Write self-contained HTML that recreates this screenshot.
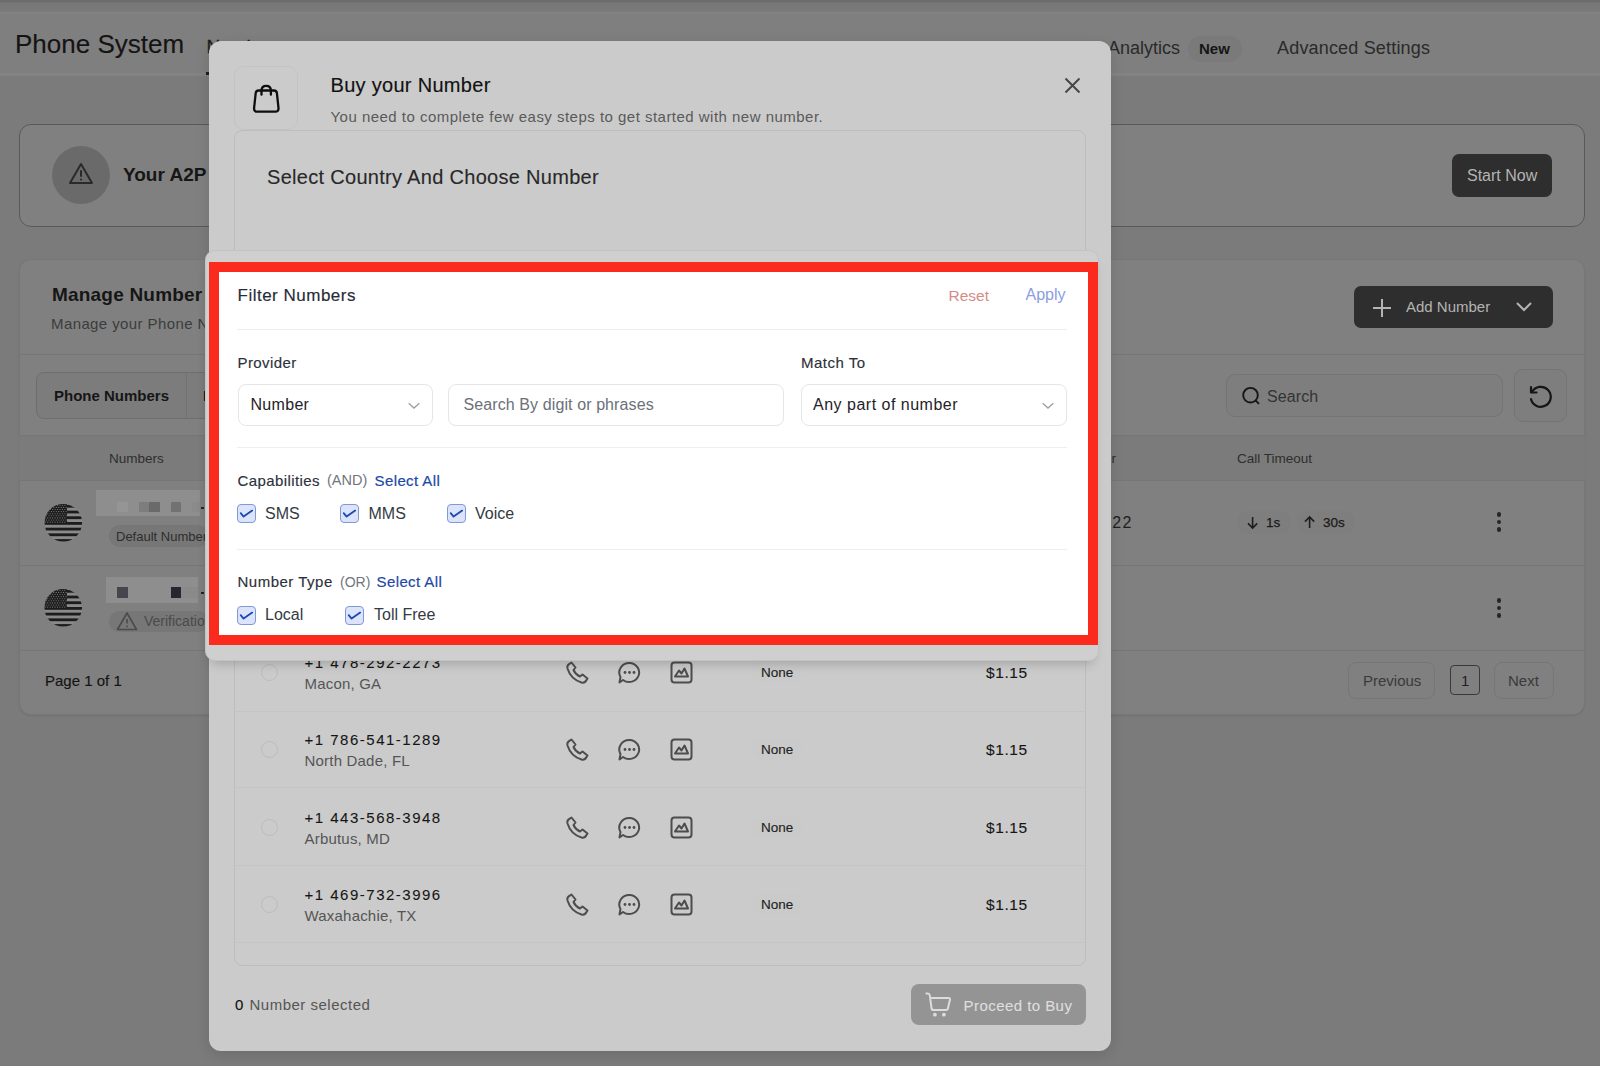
<!DOCTYPE html>
<html><head><meta charset="utf-8"><title>Phone System</title>
<style>
html,body{margin:0;padding:0;}
body{width:1600px;height:1066px;overflow:hidden;position:relative;background:#7b7b7b;font-family:"Liberation Sans", sans-serif;}
</style></head><body>
<div style="position:absolute;left:0px;top:2px;width:1600px;height:74px;background:#7f7f7f"></div><div style="position:absolute;left:0px;top:0px;width:1600px;height:12px;background:linear-gradient(#6c6c6c 0px,#6c6c6c 1.5px,#767676 3px,#7b7b7b 12px)"></div><div style="position:absolute;left:0px;top:12px;width:1600px;height:2px;background:#828282"></div><div style="position:absolute;left:0px;top:73px;width:1600px;height:3px;background:#838383"></div><div style="position:absolute;left:15px;top:30.99px;font-size:26px;line-height:26px;color:#141414;font-weight:400;white-space:nowrap;-webkit-text-stroke:0.15px currentColor;">Phone System</div><div style="position:absolute;left:206.5px;top:37.42px;font-size:19px;line-height:19px;color:#1e1e1e;font-weight:400;white-space:nowrap;-webkit-text-stroke:0.3px currentColor;">Numbers</div><div style="position:absolute;left:206px;top:72px;width:60px;height:3px;background:#1e1e1e"></div><div style="position:absolute;left:278px;top:38.76px;font-size:18px;line-height:18px;color:#2a2a2a;font-weight:400;white-space:nowrap;">Number Pools</div><div style="position:absolute;left:420px;top:38.76px;font-size:18px;line-height:18px;color:#2a2a2a;font-weight:400;white-space:nowrap;">Call Flows</div><div style="position:absolute;left:545px;top:38.76px;font-size:18px;line-height:18px;color:#2a2a2a;font-weight:400;white-space:nowrap;">Trust Center</div><div style="position:absolute;left:700px;top:38.76px;font-size:18px;line-height:18px;color:#2a2a2a;font-weight:400;white-space:nowrap;">Call Recordings</div><div style="position:absolute;left:880px;top:38.76px;font-size:18px;line-height:18px;color:#2a2a2a;font-weight:400;white-space:nowrap;">Voice AI</div><div style="position:absolute;left:1000px;top:38.76px;font-size:18px;line-height:18px;color:#2a2a2a;font-weight:400;white-space:nowrap;">Analytics</div><div style="position:absolute;left:1108px;top:38.76px;font-size:18px;line-height:18px;color:#2a2a2a;font-weight:400;white-space:nowrap;">Analytics</div><div style="position:absolute;left:1188px;top:36px;width:54px;height:26px;background:#7a7a7a;border-radius:13px"></div><div style="position:absolute;left:1199px;top:41.30px;font-size:15px;line-height:15px;color:#161616;font-weight:700;white-space:nowrap;">New</div><div style="position:absolute;left:1277px;top:38.76px;font-size:18px;line-height:18px;color:#2a2a2a;font-weight:400;white-space:nowrap;letter-spacing:0.18px;">Advanced Settings</div><div style="position:absolute;left:19px;top:124px;width:1564px;height:101px;border:1px solid #595959;border-radius:12px;background:#808080"></div><div style="position:absolute;left:52px;top:146px;width:58px;height:58px;border-radius:50%;background:#6a6a6a"></div><svg style="position:absolute;left:68px;top:161px;" width="26" height="26" viewBox="0 0 26 26"><path d="M13 3 L24 22 L2 22 Z" fill="none" stroke="#2a2a2a" stroke-width="2" stroke-linejoin="round"/><line x1="13" y1="10" x2="13" y2="15" stroke="#2a2a2a" stroke-width="2" stroke-linecap="round"/><circle cx="13" cy="18.5" r="1.1" fill="#2a2a2a"/></svg><div style="position:absolute;left:123px;top:164.92px;font-size:19px;line-height:19px;color:#161616;font-weight:700;white-space:nowrap;">Your A2P Registration is pending</div><div style="position:absolute;left:1452px;top:154px;width:100px;height:43px;background:#2e2e2e;border-radius:7px"></div><div style="position:absolute;left:1467px;top:167.96px;font-size:16px;line-height:16px;color:#b4b4b4;font-weight:400;white-space:nowrap;">Start Now</div><div style="position:absolute;left:19px;top:259px;width:1566px;height:456px;background:#808080;border-radius:12px;border:1px solid #777;box-sizing:border-box;box-shadow:0 1px 2px rgba(0,0,0,0.08)"></div><div style="position:absolute;left:52px;top:284.92px;font-size:19px;line-height:19px;color:#161616;font-weight:700;white-space:nowrap;letter-spacing:0.2px;">Manage Number</div><div style="position:absolute;left:51px;top:315.80px;font-size:15px;line-height:15px;color:#3c3c3c;font-weight:400;white-space:nowrap;letter-spacing:0.4px;">Manage your Phone Numbers</div><div style="position:absolute;left:1354px;top:286px;width:199px;height:42px;background:#2e2e2e;border-radius:7px"></div><svg style="position:absolute;left:1372px;top:298px;" width="20" height="20" viewBox="0 0 20 20"><path d="M10 1 V19 M1 10 H19" stroke="#b4b4b4" stroke-width="2"/></svg><div style="position:absolute;left:1406px;top:299.30px;font-size:15px;line-height:15px;color:#b4b4b4;font-weight:400;white-space:nowrap;">Add Number</div><svg style="position:absolute;left:1515px;top:300px;" width="18" height="12" viewBox="0 0 18 12"><path d="M2 3 L9 10 L16 3" fill="none" stroke="#b4b4b4" stroke-width="2"/></svg><div style="position:absolute;left:19px;top:354px;width:1566px;height:1px;background:#767676"></div><div style="position:absolute;left:36px;top:372px;width:300px;height:46.5px;border:1px solid #6e6e6e;border-radius:8px;background:#7c7c7c;box-sizing:border-box"></div><div style="position:absolute;left:185.5px;top:372px;width:1px;height:46.5px;background:#727272"></div><div style="position:absolute;left:54px;top:388.30px;font-size:15px;line-height:15px;color:#161616;font-weight:700;white-space:nowrap;">Phone Numbers</div><div style="position:absolute;left:203px;top:388.30px;font-size:15px;line-height:15px;color:#121212;font-weight:700;white-space:nowrap;">Porting</div><div style="position:absolute;left:1226px;top:374px;width:277px;height:43px;border:1px solid #747474;border-radius:9px;background:#7e7e7e;box-sizing:border-box"></div><svg style="position:absolute;left:1241px;top:386px;" width="21" height="21" viewBox="0 0 21 21"><circle cx="9.5" cy="9.2" r="7.3" fill="none" stroke="#161616" stroke-width="1.9"/><path d="M14.8 14.6 L17.5 17.3" stroke="#161616" stroke-width="1.9" stroke-linecap="round"/></svg><div style="position:absolute;left:1267px;top:389.46px;font-size:16px;line-height:16px;color:#343434;font-weight:400;white-space:nowrap;letter-spacing:0.1px;">Search</div><div style="position:absolute;left:1514px;top:369px;width:53px;height:53px;border:1px solid #747474;border-radius:9px;background:#7e7e7e;box-sizing:border-box"></div><svg style="position:absolute;left:1527px;top:383px;" width="28" height="28" viewBox="0 0 28 28"><path d="M5 9 A10 10 0 1 1 4 16" fill="none" stroke="#161616" stroke-width="2.2" stroke-linecap="round"/><path d="M4 4 V9.5 H9.5" fill="none" stroke="#161616" stroke-width="2.2" stroke-linecap="round" stroke-linejoin="round"/></svg><div style="position:absolute;left:19px;top:435px;width:1566px;height:46px;background:#7b7b7b;border-top:1px solid #767676;border-bottom:1px solid #767676;box-sizing:border-box"></div><div style="position:absolute;left:109px;top:451.57px;font-size:13.5px;line-height:13.5px;color:#2e2e2e;font-weight:400;white-space:nowrap;">Numbers</div><div style="position:absolute;left:1237px;top:451.57px;font-size:13.5px;line-height:13.5px;color:#2e2e2e;font-weight:400;white-space:nowrap;">Call Timeout</div><div style="position:absolute;left:1054.5px;top:451.57px;font-size:13.5px;line-height:13.5px;color:#2e2e2e;font-weight:400;white-space:nowrap;">Forwarder</div><div style="position:absolute;left:19px;top:565px;width:1566px;height:1px;background:#767676"></div><div style="position:absolute;left:19px;top:650px;width:1566px;height:1px;background:#767676"></div><svg style="position:absolute;left:0;top:0" width="1600" height="1066"><defs><clipPath id="c522.8"><circle cx="63.3" cy="522.8" r="18.8"/></clipPath></defs><g clip-path="url(#c522.8)"><rect x="44.5" y="503.99999999999994" width="37.6" height="37.6" fill="#8a8a8a"/><rect x="44.5" y="504.90" width="37.6" height="2.8" fill="#1c1c1c"/><rect x="44.5" y="510.60" width="37.6" height="2.8" fill="#1c1c1c"/><rect x="44.5" y="516.30" width="37.6" height="2.8" fill="#1c1c1c"/><rect x="44.5" y="522.00" width="37.6" height="2.8" fill="#1c1c1c"/><rect x="44.5" y="527.70" width="37.6" height="2.8" fill="#1c1c1c"/><rect x="44.5" y="533.40" width="37.6" height="2.8" fill="#1c1c1c"/><rect x="44.5" y="539.10" width="37.6" height="2.8" fill="#1c1c1c"/><rect x="44.5" y="503.99999999999994" width="22.5" height="19.8" fill="#1c1c1c"/><circle cx="45.30" cy="505.30" r="0.55" fill="#858585"/><circle cx="47.75" cy="505.30" r="0.55" fill="#858585"/><circle cx="50.20" cy="505.30" r="0.55" fill="#858585"/><circle cx="52.65" cy="505.30" r="0.55" fill="#858585"/><circle cx="55.10" cy="505.30" r="0.55" fill="#858585"/><circle cx="57.55" cy="505.30" r="0.55" fill="#858585"/><circle cx="60.00" cy="505.30" r="0.55" fill="#858585"/><circle cx="62.45" cy="505.30" r="0.55" fill="#858585"/><circle cx="64.90" cy="505.30" r="0.55" fill="#858585"/><circle cx="46.50" cy="507.40" r="0.55" fill="#858585"/><circle cx="48.95" cy="507.40" r="0.55" fill="#858585"/><circle cx="51.40" cy="507.40" r="0.55" fill="#858585"/><circle cx="53.85" cy="507.40" r="0.55" fill="#858585"/><circle cx="56.30" cy="507.40" r="0.55" fill="#858585"/><circle cx="58.75" cy="507.40" r="0.55" fill="#858585"/><circle cx="61.20" cy="507.40" r="0.55" fill="#858585"/><circle cx="63.65" cy="507.40" r="0.55" fill="#858585"/><circle cx="66.10" cy="507.40" r="0.55" fill="#858585"/><circle cx="45.30" cy="509.50" r="0.55" fill="#858585"/><circle cx="47.75" cy="509.50" r="0.55" fill="#858585"/><circle cx="50.20" cy="509.50" r="0.55" fill="#858585"/><circle cx="52.65" cy="509.50" r="0.55" fill="#858585"/><circle cx="55.10" cy="509.50" r="0.55" fill="#858585"/><circle cx="57.55" cy="509.50" r="0.55" fill="#858585"/><circle cx="60.00" cy="509.50" r="0.55" fill="#858585"/><circle cx="62.45" cy="509.50" r="0.55" fill="#858585"/><circle cx="64.90" cy="509.50" r="0.55" fill="#858585"/><circle cx="46.50" cy="511.60" r="0.55" fill="#858585"/><circle cx="48.95" cy="511.60" r="0.55" fill="#858585"/><circle cx="51.40" cy="511.60" r="0.55" fill="#858585"/><circle cx="53.85" cy="511.60" r="0.55" fill="#858585"/><circle cx="56.30" cy="511.60" r="0.55" fill="#858585"/><circle cx="58.75" cy="511.60" r="0.55" fill="#858585"/><circle cx="61.20" cy="511.60" r="0.55" fill="#858585"/><circle cx="63.65" cy="511.60" r="0.55" fill="#858585"/><circle cx="66.10" cy="511.60" r="0.55" fill="#858585"/><circle cx="45.30" cy="513.70" r="0.55" fill="#858585"/><circle cx="47.75" cy="513.70" r="0.55" fill="#858585"/><circle cx="50.20" cy="513.70" r="0.55" fill="#858585"/><circle cx="52.65" cy="513.70" r="0.55" fill="#858585"/><circle cx="55.10" cy="513.70" r="0.55" fill="#858585"/><circle cx="57.55" cy="513.70" r="0.55" fill="#858585"/><circle cx="60.00" cy="513.70" r="0.55" fill="#858585"/><circle cx="62.45" cy="513.70" r="0.55" fill="#858585"/><circle cx="64.90" cy="513.70" r="0.55" fill="#858585"/><circle cx="46.50" cy="515.80" r="0.55" fill="#858585"/><circle cx="48.95" cy="515.80" r="0.55" fill="#858585"/><circle cx="51.40" cy="515.80" r="0.55" fill="#858585"/><circle cx="53.85" cy="515.80" r="0.55" fill="#858585"/><circle cx="56.30" cy="515.80" r="0.55" fill="#858585"/><circle cx="58.75" cy="515.80" r="0.55" fill="#858585"/><circle cx="61.20" cy="515.80" r="0.55" fill="#858585"/><circle cx="63.65" cy="515.80" r="0.55" fill="#858585"/><circle cx="66.10" cy="515.80" r="0.55" fill="#858585"/><circle cx="45.30" cy="517.90" r="0.55" fill="#858585"/><circle cx="47.75" cy="517.90" r="0.55" fill="#858585"/><circle cx="50.20" cy="517.90" r="0.55" fill="#858585"/><circle cx="52.65" cy="517.90" r="0.55" fill="#858585"/><circle cx="55.10" cy="517.90" r="0.55" fill="#858585"/><circle cx="57.55" cy="517.90" r="0.55" fill="#858585"/><circle cx="60.00" cy="517.90" r="0.55" fill="#858585"/><circle cx="62.45" cy="517.90" r="0.55" fill="#858585"/><circle cx="64.90" cy="517.90" r="0.55" fill="#858585"/><circle cx="46.50" cy="520.00" r="0.55" fill="#858585"/><circle cx="48.95" cy="520.00" r="0.55" fill="#858585"/><circle cx="51.40" cy="520.00" r="0.55" fill="#858585"/><circle cx="53.85" cy="520.00" r="0.55" fill="#858585"/><circle cx="56.30" cy="520.00" r="0.55" fill="#858585"/><circle cx="58.75" cy="520.00" r="0.55" fill="#858585"/><circle cx="61.20" cy="520.00" r="0.55" fill="#858585"/><circle cx="63.65" cy="520.00" r="0.55" fill="#858585"/><circle cx="66.10" cy="520.00" r="0.55" fill="#858585"/><circle cx="45.30" cy="522.10" r="0.55" fill="#858585"/><circle cx="47.75" cy="522.10" r="0.55" fill="#858585"/><circle cx="50.20" cy="522.10" r="0.55" fill="#858585"/><circle cx="52.65" cy="522.10" r="0.55" fill="#858585"/><circle cx="55.10" cy="522.10" r="0.55" fill="#858585"/><circle cx="57.55" cy="522.10" r="0.55" fill="#858585"/><circle cx="60.00" cy="522.10" r="0.55" fill="#858585"/><circle cx="62.45" cy="522.10" r="0.55" fill="#858585"/><circle cx="64.90" cy="522.10" r="0.55" fill="#858585"/></g></svg><svg style="position:absolute;left:0;top:0" width="1600" height="1066"><defs><clipPath id="c607.8"><circle cx="63.2" cy="607.8" r="18.8"/></clipPath></defs><g clip-path="url(#c607.8)"><rect x="44.400000000000006" y="589.0" width="37.6" height="37.6" fill="#8a8a8a"/><rect x="44.400000000000006" y="589.90" width="37.6" height="2.8" fill="#1c1c1c"/><rect x="44.400000000000006" y="595.60" width="37.6" height="2.8" fill="#1c1c1c"/><rect x="44.400000000000006" y="601.30" width="37.6" height="2.8" fill="#1c1c1c"/><rect x="44.400000000000006" y="607.00" width="37.6" height="2.8" fill="#1c1c1c"/><rect x="44.400000000000006" y="612.70" width="37.6" height="2.8" fill="#1c1c1c"/><rect x="44.400000000000006" y="618.40" width="37.6" height="2.8" fill="#1c1c1c"/><rect x="44.400000000000006" y="624.10" width="37.6" height="2.8" fill="#1c1c1c"/><rect x="44.400000000000006" y="589.0" width="22.5" height="19.8" fill="#1c1c1c"/><circle cx="45.20" cy="590.30" r="0.55" fill="#858585"/><circle cx="47.65" cy="590.30" r="0.55" fill="#858585"/><circle cx="50.10" cy="590.30" r="0.55" fill="#858585"/><circle cx="52.55" cy="590.30" r="0.55" fill="#858585"/><circle cx="55.00" cy="590.30" r="0.55" fill="#858585"/><circle cx="57.45" cy="590.30" r="0.55" fill="#858585"/><circle cx="59.90" cy="590.30" r="0.55" fill="#858585"/><circle cx="62.35" cy="590.30" r="0.55" fill="#858585"/><circle cx="64.80" cy="590.30" r="0.55" fill="#858585"/><circle cx="46.40" cy="592.40" r="0.55" fill="#858585"/><circle cx="48.85" cy="592.40" r="0.55" fill="#858585"/><circle cx="51.30" cy="592.40" r="0.55" fill="#858585"/><circle cx="53.75" cy="592.40" r="0.55" fill="#858585"/><circle cx="56.20" cy="592.40" r="0.55" fill="#858585"/><circle cx="58.65" cy="592.40" r="0.55" fill="#858585"/><circle cx="61.10" cy="592.40" r="0.55" fill="#858585"/><circle cx="63.55" cy="592.40" r="0.55" fill="#858585"/><circle cx="66.00" cy="592.40" r="0.55" fill="#858585"/><circle cx="45.20" cy="594.50" r="0.55" fill="#858585"/><circle cx="47.65" cy="594.50" r="0.55" fill="#858585"/><circle cx="50.10" cy="594.50" r="0.55" fill="#858585"/><circle cx="52.55" cy="594.50" r="0.55" fill="#858585"/><circle cx="55.00" cy="594.50" r="0.55" fill="#858585"/><circle cx="57.45" cy="594.50" r="0.55" fill="#858585"/><circle cx="59.90" cy="594.50" r="0.55" fill="#858585"/><circle cx="62.35" cy="594.50" r="0.55" fill="#858585"/><circle cx="64.80" cy="594.50" r="0.55" fill="#858585"/><circle cx="46.40" cy="596.60" r="0.55" fill="#858585"/><circle cx="48.85" cy="596.60" r="0.55" fill="#858585"/><circle cx="51.30" cy="596.60" r="0.55" fill="#858585"/><circle cx="53.75" cy="596.60" r="0.55" fill="#858585"/><circle cx="56.20" cy="596.60" r="0.55" fill="#858585"/><circle cx="58.65" cy="596.60" r="0.55" fill="#858585"/><circle cx="61.10" cy="596.60" r="0.55" fill="#858585"/><circle cx="63.55" cy="596.60" r="0.55" fill="#858585"/><circle cx="66.00" cy="596.60" r="0.55" fill="#858585"/><circle cx="45.20" cy="598.70" r="0.55" fill="#858585"/><circle cx="47.65" cy="598.70" r="0.55" fill="#858585"/><circle cx="50.10" cy="598.70" r="0.55" fill="#858585"/><circle cx="52.55" cy="598.70" r="0.55" fill="#858585"/><circle cx="55.00" cy="598.70" r="0.55" fill="#858585"/><circle cx="57.45" cy="598.70" r="0.55" fill="#858585"/><circle cx="59.90" cy="598.70" r="0.55" fill="#858585"/><circle cx="62.35" cy="598.70" r="0.55" fill="#858585"/><circle cx="64.80" cy="598.70" r="0.55" fill="#858585"/><circle cx="46.40" cy="600.80" r="0.55" fill="#858585"/><circle cx="48.85" cy="600.80" r="0.55" fill="#858585"/><circle cx="51.30" cy="600.80" r="0.55" fill="#858585"/><circle cx="53.75" cy="600.80" r="0.55" fill="#858585"/><circle cx="56.20" cy="600.80" r="0.55" fill="#858585"/><circle cx="58.65" cy="600.80" r="0.55" fill="#858585"/><circle cx="61.10" cy="600.80" r="0.55" fill="#858585"/><circle cx="63.55" cy="600.80" r="0.55" fill="#858585"/><circle cx="66.00" cy="600.80" r="0.55" fill="#858585"/><circle cx="45.20" cy="602.90" r="0.55" fill="#858585"/><circle cx="47.65" cy="602.90" r="0.55" fill="#858585"/><circle cx="50.10" cy="602.90" r="0.55" fill="#858585"/><circle cx="52.55" cy="602.90" r="0.55" fill="#858585"/><circle cx="55.00" cy="602.90" r="0.55" fill="#858585"/><circle cx="57.45" cy="602.90" r="0.55" fill="#858585"/><circle cx="59.90" cy="602.90" r="0.55" fill="#858585"/><circle cx="62.35" cy="602.90" r="0.55" fill="#858585"/><circle cx="64.80" cy="602.90" r="0.55" fill="#858585"/><circle cx="46.40" cy="605.00" r="0.55" fill="#858585"/><circle cx="48.85" cy="605.00" r="0.55" fill="#858585"/><circle cx="51.30" cy="605.00" r="0.55" fill="#858585"/><circle cx="53.75" cy="605.00" r="0.55" fill="#858585"/><circle cx="56.20" cy="605.00" r="0.55" fill="#858585"/><circle cx="58.65" cy="605.00" r="0.55" fill="#858585"/><circle cx="61.10" cy="605.00" r="0.55" fill="#858585"/><circle cx="63.55" cy="605.00" r="0.55" fill="#858585"/><circle cx="66.00" cy="605.00" r="0.55" fill="#858585"/><circle cx="45.20" cy="607.10" r="0.55" fill="#858585"/><circle cx="47.65" cy="607.10" r="0.55" fill="#858585"/><circle cx="50.10" cy="607.10" r="0.55" fill="#858585"/><circle cx="52.55" cy="607.10" r="0.55" fill="#858585"/><circle cx="55.00" cy="607.10" r="0.55" fill="#858585"/><circle cx="57.45" cy="607.10" r="0.55" fill="#858585"/><circle cx="59.90" cy="607.10" r="0.55" fill="#858585"/><circle cx="62.35" cy="607.10" r="0.55" fill="#858585"/><circle cx="64.80" cy="607.10" r="0.55" fill="#858585"/></g></svg><div style="position:absolute;left:96px;top:490px;width:104px;height:26px;background:#8e8e8e"></div><div style="position:absolute;left:117px;top:501.5px;width:11px;height:10.5px;background:#959595"></div><div style="position:absolute;left:138.5px;top:501.5px;width:10.5px;height:10.5px;background:#7d7d7d"></div><div style="position:absolute;left:149px;top:501.5px;width:11px;height:10.5px;background:#6a6a6a"></div><div style="position:absolute;left:170.5px;top:501.5px;width:10.5px;height:10.5px;background:#727272"></div><div style="position:absolute;left:192px;top:501.5px;width:8px;height:10.5px;background:#8a8a8a"></div><div style="position:absolute;left:201px;top:507px;width:3px;height:2px;background:#222"></div><div style="position:absolute;left:109px;top:525px;width:100px;height:22px;background:#777;border-radius:11px"></div><div style="position:absolute;left:116px;top:530.00px;font-size:13px;line-height:13px;color:#2e2e2e;font-weight:400;white-space:nowrap;">Default Number</div><div style="position:absolute;left:106px;top:577px;width:91.5px;height:26px;background:#8e8e8e"></div><div style="position:absolute;left:117px;top:586.5px;width:11px;height:11px;background:#45454d"></div><div style="position:absolute;left:170.5px;top:586.5px;width:10.5px;height:11px;background:#24282e"></div><div style="position:absolute;left:181px;top:586.5px;width:16.5px;height:11px;background:#8a8a8a"></div><div style="position:absolute;left:201px;top:592px;width:3px;height:2px;background:#222"></div><div style="position:absolute;left:109px;top:611px;width:100px;height:21px;background:#777;border-radius:11px"></div><div style="position:absolute;left:144px;top:613.65px;font-size:14px;line-height:14px;color:#4a4a4a;font-weight:400;white-space:nowrap;">Verification</div><svg style="position:absolute;left:116px;top:611px;" width="22" height="20" viewBox="0 0 22 20"><path d="M11 2 L20.5 18.5 H1.5 Z" fill="none" stroke="#4a4a4a" stroke-width="1.6" stroke-linejoin="round"/><line x1="11" y1="8" x2="11" y2="12.5" stroke="#4a4a4a" stroke-width="1.6"/><circle cx="11" cy="15.3" r="0.9" fill="#4a4a4a"/></svg><div style="position:absolute;left:900px;width:233px;top:515.16px;font-size:16px;line-height:16px;color:#1e1e1e;letter-spacing:1.5px;text-align:right;white-space:nowrap;margin-right:-1.5px">2222</div><div style="position:absolute;left:1237px;top:511px;width:54px;height:23px;background:#7e7e7e;border-radius:11px"></div><div style="position:absolute;left:1266px;top:516.37px;font-size:13.5px;line-height:13.5px;color:#1a1a1a;font-weight:400;white-space:nowrap;-webkit-text-stroke:0.25px currentColor;">1s</div><svg style="position:absolute;left:1246px;top:514px;" width="14" height="16" viewBox="0 0 14 16"><path d="M6.6 3 V14 M2 9.4 L6.6 14 L11.2 9.4" fill="none" stroke="#1e1e1e" stroke-width="1.6"/></svg><div style="position:absolute;left:1297px;top:511px;width:58px;height:23px;background:#7e7e7e;border-radius:11px"></div><div style="position:absolute;left:1323px;top:516.37px;font-size:13.5px;line-height:13.5px;color:#1a1a1a;font-weight:400;white-space:nowrap;-webkit-text-stroke:0.25px currentColor;">30s</div><svg style="position:absolute;left:1303px;top:514px;" width="14" height="16" viewBox="0 0 14 16"><path d="M6.6 14 V3 M2 7.6 L6.6 3 L11.2 7.6" fill="none" stroke="#1e1e1e" stroke-width="1.6"/></svg><div style="position:absolute;left:1496.7px;top:512.4000000000001px;width:4.6px;height:4.6px;border-radius:50%;background:#262626"></div><div style="position:absolute;left:1496.7px;top:519.7px;width:4.6px;height:4.6px;border-radius:50%;background:#262626"></div><div style="position:absolute;left:1496.7px;top:527.0px;width:4.6px;height:4.6px;border-radius:50%;background:#262626"></div><div style="position:absolute;left:1496.7px;top:598.4000000000001px;width:4.6px;height:4.6px;border-radius:50%;background:#262626"></div><div style="position:absolute;left:1496.7px;top:605.7px;width:4.6px;height:4.6px;border-radius:50%;background:#262626"></div><div style="position:absolute;left:1496.7px;top:613.0px;width:4.6px;height:4.6px;border-radius:50%;background:#262626"></div><div style="position:absolute;left:45px;top:672.80px;font-size:15px;line-height:15px;color:#141414;font-weight:400;white-space:nowrap;-webkit-text-stroke:0.15px currentColor;">Page 1 of 1</div><div style="position:absolute;left:1348px;top:662px;width:87px;height:37px;border:1px solid #767676;border-radius:8px;box-sizing:border-box"></div><div style="position:absolute;left:1363px;top:673.30px;font-size:15px;line-height:15px;color:#3a3a3a;font-weight:400;white-space:nowrap;">Previous</div><div style="position:absolute;left:1450px;top:665px;width:30px;height:30px;border:1px solid #3a3a3a;border-radius:4px;box-sizing:border-box"></div><div style="position:absolute;left:1461px;top:673.30px;font-size:15px;line-height:15px;color:#222;font-weight:400;white-space:nowrap;">1</div><div style="position:absolute;left:1494px;top:662px;width:60px;height:37px;border:1px solid #767676;border-radius:8px;box-sizing:border-box"></div><div style="position:absolute;left:1508px;top:673.30px;font-size:15px;line-height:15px;color:#3a3a3a;font-weight:400;white-space:nowrap;">Next</div><div style="position:absolute;left:209px;top:41px;width:902px;height:1010px;background:#cbcbcb;border-radius:12px;box-shadow:0 4px 14px rgba(0,0,0,0.12)"></div><div style="position:absolute;left:234px;top:66px;width:64px;height:64px;border:1px solid #c3c3c3;border-radius:10px;box-sizing:border-box"></div><svg style="position:absolute;left:240px;top:70px;" width="55" height="55" viewBox="0 0 55 55"><path d="M18.6 20.5 H34 Q36.6 20.5 36.9 23.2 L38.5 38 Q38.8 41.7 35.3 41.7 H17.3 Q13.8 41.7 14.1 38 L15.7 23.2 Q16 20.5 18.6 20.5 Z" fill="none" stroke="#0e0e0e" stroke-width="2.3" stroke-linejoin="round"/><path d="M21.5 24.7 V20.5 Q21.5 15.8 26.2 15.8 Q30.9 15.8 30.9 20.5 V24.7" fill="none" stroke="#0e0e0e" stroke-width="2.3" stroke-linecap="round"/></svg><div style="position:absolute;left:330.5px;top:74.87px;font-size:20px;line-height:20px;color:#121212;font-weight:400;white-space:nowrap;letter-spacing:0.3px;-webkit-text-stroke:0.15px currentColor;">Buy your Number</div><div style="position:absolute;left:330.5px;top:109.00px;font-size:15px;line-height:15px;color:#5a5a5a;font-weight:400;white-space:nowrap;letter-spacing:0.48px;">You need to complete few easy steps to get started with new number.</div><svg style="position:absolute;left:1064px;top:77px;" width="17" height="17" viewBox="0 0 17 17"><path d="M1.5 1.5 L15.5 15.5 M15.5 1.5 L1.5 15.5" stroke="#474747" stroke-width="2"/></svg><div style="position:absolute;left:234px;top:130px;width:852px;height:200px;border:1px solid #bdbdbd;border-radius:8px;box-sizing:border-box"></div><div style="position:absolute;left:267px;top:167.07px;font-size:20px;line-height:20px;color:#282828;font-weight:400;white-space:nowrap;letter-spacing:0.3px;-webkit-text-stroke:0.12px currentColor;">Select Country And Choose Number</div><div style="position:absolute;left:234px;top:500px;width:852px;height:466px;border:1px solid #bdbdbd;border-radius:8px;box-sizing:border-box"></div><div style="position:absolute;left:235px;top:711px;width:850px;height:1px;background:#c5c5c5"></div><div style="position:absolute;left:235px;top:787px;width:850px;height:1px;background:#c5c5c5"></div><div style="position:absolute;left:235px;top:865px;width:850px;height:1px;background:#c5c5c5"></div><div style="position:absolute;left:235px;top:942px;width:850px;height:1px;background:#c5c5c5"></div><div style="position:absolute;left:261.0px;top:663.5px;width:17px;height:17px;border-radius:50%;border:1px solid #bcbcbc;box-sizing:border-box"></div><div style="position:absolute;left:304.5px;top:654.80px;font-size:15px;line-height:15px;color:#151515;font-weight:400;white-space:nowrap;letter-spacing:1.5px;-webkit-text-stroke:0.08px currentColor;">+1 478-292-2273</div><div style="position:absolute;left:304.5px;top:675.80px;font-size:15px;line-height:15px;color:#555;font-weight:400;white-space:nowrap;letter-spacing:0.2px;">Macon, GA</div><svg style="position:absolute;left:565px;top:661px;" width="26" height="24" viewBox="0 0 26 24"><path d="M5 2.5 C3 3.5 1.8 5 2.5 7.5 C4.5 14 10 19.5 16.5 21.5 C19 22.2 20.5 21 21.5 19 L22.5 17.5 L17.5 13.5 L15 15.5 C11.8 14 9.8 12 8.5 9 L10.5 6.5 L6.5 1.5 Z" fill="none" stroke="#4d4d4d" stroke-width="2" stroke-linejoin="round"/></svg><svg style="position:absolute;left:617px;top:661px;" width="25" height="23" viewBox="0 0 25 23"><path d="M12.5 2 A10 9.5 0 1 1 6 19 L2.5 21.5 L3.5 16 A10 9.5 0 0 1 12.5 2 Z" fill="none" stroke="#4d4d4d" stroke-width="2" stroke-linejoin="round"/><circle cx="8" cy="11.5" r="1.4" fill="#4d4d4d"/><circle cx="12.5" cy="11.5" r="1.4" fill="#4d4d4d"/><circle cx="17" cy="11.5" r="1.4" fill="#4d4d4d"/></svg><svg style="position:absolute;left:670px;top:661px;" width="23" height="23" viewBox="0 0 23 23"><rect x="1.5" y="1.5" width="20" height="20" rx="3" fill="none" stroke="#4d4d4d" stroke-width="2"/><path d="M5 15.5 L9 9.5 L11.5 12.5 L14.5 7.5 L18 15.5 Z" fill="none" stroke="#4d4d4d" stroke-width="2" stroke-linejoin="round"/></svg><div style="position:absolute;left:752px;top:661px;width:50px;height:22px;background:#cacaca;border-radius:11px"></div><div style="position:absolute;left:761px;top:665.77px;font-size:13.5px;line-height:13.5px;color:#222;font-weight:400;white-space:nowrap;-webkit-text-stroke:0.12px currentColor;">None</div><div style="position:absolute;left:986px;top:664.88px;font-size:15.5px;line-height:15.5px;color:#151515;font-weight:400;white-space:nowrap;letter-spacing:0.6px;-webkit-text-stroke:0.12px currentColor;">$1.15</div><div style="position:absolute;left:261.0px;top:740.5px;width:17px;height:17px;border-radius:50%;border:1px solid #bcbcbc;box-sizing:border-box"></div><div style="position:absolute;left:304.5px;top:731.80px;font-size:15px;line-height:15px;color:#151515;font-weight:400;white-space:nowrap;letter-spacing:1.5px;-webkit-text-stroke:0.08px currentColor;">+1 786-541-1289</div><div style="position:absolute;left:304.5px;top:752.80px;font-size:15px;line-height:15px;color:#555;font-weight:400;white-space:nowrap;letter-spacing:0.2px;">North Dade, FL</div><svg style="position:absolute;left:565px;top:738px;" width="26" height="24" viewBox="0 0 26 24"><path d="M5 2.5 C3 3.5 1.8 5 2.5 7.5 C4.5 14 10 19.5 16.5 21.5 C19 22.2 20.5 21 21.5 19 L22.5 17.5 L17.5 13.5 L15 15.5 C11.8 14 9.8 12 8.5 9 L10.5 6.5 L6.5 1.5 Z" fill="none" stroke="#4d4d4d" stroke-width="2" stroke-linejoin="round"/></svg><svg style="position:absolute;left:617px;top:738px;" width="25" height="23" viewBox="0 0 25 23"><path d="M12.5 2 A10 9.5 0 1 1 6 19 L2.5 21.5 L3.5 16 A10 9.5 0 0 1 12.5 2 Z" fill="none" stroke="#4d4d4d" stroke-width="2" stroke-linejoin="round"/><circle cx="8" cy="11.5" r="1.4" fill="#4d4d4d"/><circle cx="12.5" cy="11.5" r="1.4" fill="#4d4d4d"/><circle cx="17" cy="11.5" r="1.4" fill="#4d4d4d"/></svg><svg style="position:absolute;left:670px;top:738px;" width="23" height="23" viewBox="0 0 23 23"><rect x="1.5" y="1.5" width="20" height="20" rx="3" fill="none" stroke="#4d4d4d" stroke-width="2"/><path d="M5 15.5 L9 9.5 L11.5 12.5 L14.5 7.5 L18 15.5 Z" fill="none" stroke="#4d4d4d" stroke-width="2" stroke-linejoin="round"/></svg><div style="position:absolute;left:752px;top:738px;width:50px;height:22px;background:#cacaca;border-radius:11px"></div><div style="position:absolute;left:761px;top:742.77px;font-size:13.5px;line-height:13.5px;color:#222;font-weight:400;white-space:nowrap;-webkit-text-stroke:0.12px currentColor;">None</div><div style="position:absolute;left:986px;top:741.88px;font-size:15.5px;line-height:15.5px;color:#151515;font-weight:400;white-space:nowrap;letter-spacing:0.6px;-webkit-text-stroke:0.12px currentColor;">$1.15</div><div style="position:absolute;left:261.0px;top:818.5px;width:17px;height:17px;border-radius:50%;border:1px solid #bcbcbc;box-sizing:border-box"></div><div style="position:absolute;left:304.5px;top:809.80px;font-size:15px;line-height:15px;color:#151515;font-weight:400;white-space:nowrap;letter-spacing:1.5px;-webkit-text-stroke:0.08px currentColor;">+1 443-568-3948</div><div style="position:absolute;left:304.5px;top:830.80px;font-size:15px;line-height:15px;color:#555;font-weight:400;white-space:nowrap;letter-spacing:0.2px;">Arbutus, MD</div><svg style="position:absolute;left:565px;top:816px;" width="26" height="24" viewBox="0 0 26 24"><path d="M5 2.5 C3 3.5 1.8 5 2.5 7.5 C4.5 14 10 19.5 16.5 21.5 C19 22.2 20.5 21 21.5 19 L22.5 17.5 L17.5 13.5 L15 15.5 C11.8 14 9.8 12 8.5 9 L10.5 6.5 L6.5 1.5 Z" fill="none" stroke="#4d4d4d" stroke-width="2" stroke-linejoin="round"/></svg><svg style="position:absolute;left:617px;top:816px;" width="25" height="23" viewBox="0 0 25 23"><path d="M12.5 2 A10 9.5 0 1 1 6 19 L2.5 21.5 L3.5 16 A10 9.5 0 0 1 12.5 2 Z" fill="none" stroke="#4d4d4d" stroke-width="2" stroke-linejoin="round"/><circle cx="8" cy="11.5" r="1.4" fill="#4d4d4d"/><circle cx="12.5" cy="11.5" r="1.4" fill="#4d4d4d"/><circle cx="17" cy="11.5" r="1.4" fill="#4d4d4d"/></svg><svg style="position:absolute;left:670px;top:816px;" width="23" height="23" viewBox="0 0 23 23"><rect x="1.5" y="1.5" width="20" height="20" rx="3" fill="none" stroke="#4d4d4d" stroke-width="2"/><path d="M5 15.5 L9 9.5 L11.5 12.5 L14.5 7.5 L18 15.5 Z" fill="none" stroke="#4d4d4d" stroke-width="2" stroke-linejoin="round"/></svg><div style="position:absolute;left:752px;top:816px;width:50px;height:22px;background:#cacaca;border-radius:11px"></div><div style="position:absolute;left:761px;top:820.77px;font-size:13.5px;line-height:13.5px;color:#222;font-weight:400;white-space:nowrap;-webkit-text-stroke:0.12px currentColor;">None</div><div style="position:absolute;left:986px;top:819.88px;font-size:15.5px;line-height:15.5px;color:#151515;font-weight:400;white-space:nowrap;letter-spacing:0.6px;-webkit-text-stroke:0.12px currentColor;">$1.15</div><div style="position:absolute;left:261.0px;top:895.5px;width:17px;height:17px;border-radius:50%;border:1px solid #bcbcbc;box-sizing:border-box"></div><div style="position:absolute;left:304.5px;top:886.80px;font-size:15px;line-height:15px;color:#151515;font-weight:400;white-space:nowrap;letter-spacing:1.5px;-webkit-text-stroke:0.08px currentColor;">+1 469-732-3996</div><div style="position:absolute;left:304.5px;top:907.80px;font-size:15px;line-height:15px;color:#555;font-weight:400;white-space:nowrap;letter-spacing:0.2px;">Waxahachie, TX</div><svg style="position:absolute;left:565px;top:893px;" width="26" height="24" viewBox="0 0 26 24"><path d="M5 2.5 C3 3.5 1.8 5 2.5 7.5 C4.5 14 10 19.5 16.5 21.5 C19 22.2 20.5 21 21.5 19 L22.5 17.5 L17.5 13.5 L15 15.5 C11.8 14 9.8 12 8.5 9 L10.5 6.5 L6.5 1.5 Z" fill="none" stroke="#4d4d4d" stroke-width="2" stroke-linejoin="round"/></svg><svg style="position:absolute;left:617px;top:893px;" width="25" height="23" viewBox="0 0 25 23"><path d="M12.5 2 A10 9.5 0 1 1 6 19 L2.5 21.5 L3.5 16 A10 9.5 0 0 1 12.5 2 Z" fill="none" stroke="#4d4d4d" stroke-width="2" stroke-linejoin="round"/><circle cx="8" cy="11.5" r="1.4" fill="#4d4d4d"/><circle cx="12.5" cy="11.5" r="1.4" fill="#4d4d4d"/><circle cx="17" cy="11.5" r="1.4" fill="#4d4d4d"/></svg><svg style="position:absolute;left:670px;top:893px;" width="23" height="23" viewBox="0 0 23 23"><rect x="1.5" y="1.5" width="20" height="20" rx="3" fill="none" stroke="#4d4d4d" stroke-width="2"/><path d="M5 15.5 L9 9.5 L11.5 12.5 L14.5 7.5 L18 15.5 Z" fill="none" stroke="#4d4d4d" stroke-width="2" stroke-linejoin="round"/></svg><div style="position:absolute;left:752px;top:893px;width:50px;height:22px;background:#cacaca;border-radius:11px"></div><div style="position:absolute;left:761px;top:897.77px;font-size:13.5px;line-height:13.5px;color:#222;font-weight:400;white-space:nowrap;-webkit-text-stroke:0.12px currentColor;">None</div><div style="position:absolute;left:986px;top:896.88px;font-size:15.5px;line-height:15.5px;color:#151515;font-weight:400;white-space:nowrap;letter-spacing:0.6px;-webkit-text-stroke:0.12px currentColor;">$1.15</div><div style="position:absolute;left:235px;top:997.30px;font-size:15px;line-height:15px;color:#111;font-weight:400;white-space:nowrap;-webkit-text-stroke:0.15px currentColor;">0</div><div style="position:absolute;left:249.5px;top:997.30px;font-size:15px;line-height:15px;color:#555;font-weight:400;white-space:nowrap;letter-spacing:0.5px;">Number selected</div><div style="position:absolute;left:911px;top:984px;width:175px;height:41px;background:#949494;border-radius:8px"></div><svg style="position:absolute;left:925px;top:991px;" width="28" height="28" viewBox="0 0 28 28"><path d="M1.5 2.5 Q4.5 2 4.8 4.5 L6.5 17 Q6.8 19 8.5 19 H21 Q22.8 19 23 17 L25 8.5 Q25.2 7 23.7 7 H5.3" fill="none" stroke="#dcdcdc" stroke-width="2" stroke-linejoin="round" stroke-linecap="round"/><circle cx="9.9" cy="23.7" r="1.9" fill="#dcdcdc"/><circle cx="18.9" cy="23.7" r="1.9" fill="#dcdcdc"/></svg><div style="position:absolute;left:963.5px;top:997.80px;font-size:15px;line-height:15px;color:#dedede;font-weight:400;white-space:nowrap;letter-spacing:0.45px;-webkit-text-stroke:0.12px currentColor;">Proceed to Buy</div><div style="position:absolute;left:205px;top:250px;width:894px;height:410.8px;background:#cfcfcf;border-radius:10px;border:1px solid #c3c3c3;box-sizing:border-box;box-shadow:0 8px 12px -6px rgba(0,0,0,0.22)"></div><div style="position:absolute;left:208.5px;top:262px;width:889.5px;height:383px;background:#fff;border:10px solid #fc2a1d;box-sizing:border-box"></div><div style="position:absolute;left:237.5px;top:286.61px;font-size:17px;line-height:17px;color:#272c36;font-weight:400;white-space:nowrap;letter-spacing:0.5px;-webkit-text-stroke:0.15px currentColor;">Filter Numbers</div><div style="position:absolute;left:948.5px;top:287.88px;font-size:15.5px;line-height:15.5px;color:#d48c86;font-weight:400;white-space:nowrap;">Reset</div><div style="position:absolute;left:1025.5px;top:287.46px;font-size:16px;line-height:16px;color:#8a9ee0;font-weight:400;white-space:nowrap;">Apply</div><div style="position:absolute;left:237px;top:329px;width:830px;height:1px;background:#eceef1"></div><div style="position:absolute;left:237.5px;top:355.30px;font-size:15px;line-height:15px;color:#2c313b;font-weight:400;white-space:nowrap;letter-spacing:0.4px;-webkit-text-stroke:0.15px currentColor;">Provider</div><div style="position:absolute;left:801px;top:355.30px;font-size:15px;line-height:15px;color:#2c313b;font-weight:400;white-space:nowrap;letter-spacing:0.5px;-webkit-text-stroke:0.15px currentColor;">Match To</div><div style="position:absolute;left:237.5px;top:384px;width:195px;height:42px;border:1px solid #e4e6ea;border-radius:8px;box-sizing:border-box"></div><div style="position:absolute;left:250.5px;top:396.96px;font-size:16px;line-height:16px;color:#1f2329;font-weight:400;white-space:nowrap;letter-spacing:0.3px;">Number</div><svg style="position:absolute;left:406.5px;top:400.5px;" width="14" height="10" viewBox="0 0 14 10"><path d="M1.7 2.2 L7 7 L12.3 2.2" fill="none" stroke="#9a9ea5" stroke-width="1.3"/></svg><div style="position:absolute;left:448px;top:384px;width:336px;height:42px;border:1px solid #e4e6ea;border-radius:8px;box-sizing:border-box"></div><div style="position:absolute;left:463.5px;top:397.46px;font-size:16px;line-height:16px;color:#6b7079;font-weight:400;white-space:nowrap;letter-spacing:0.1px;">Search By digit or phrases</div><div style="position:absolute;left:800.5px;top:384px;width:266px;height:42px;border:1px solid #e4e6ea;border-radius:8px;box-sizing:border-box"></div><div style="position:absolute;left:813px;top:396.96px;font-size:16px;line-height:16px;color:#1f2329;font-weight:400;white-space:nowrap;letter-spacing:0.5px;">Any part of number</div><svg style="position:absolute;left:1040.5px;top:400.5px;" width="14" height="10" viewBox="0 0 14 10"><path d="M1.7 2.2 L7 7 L12.3 2.2" fill="none" stroke="#9a9ea5" stroke-width="1.3"/></svg><div style="position:absolute;left:237px;top:447px;width:830px;height:1px;background:#eceef1"></div><div style="position:absolute;left:237.5px;top:473.00px;font-size:15px;line-height:15px;color:#2c313b;font-weight:400;white-space:nowrap;letter-spacing:0.4px;-webkit-text-stroke:0.15px currentColor;">Capabilities</div><div style="position:absolute;left:327px;top:473.43px;font-size:14.5px;line-height:14.5px;color:#71757d;font-weight:400;white-space:nowrap;">(AND)</div><div style="position:absolute;left:374.5px;top:473.00px;font-size:15px;line-height:15px;color:#1c48a6;font-weight:400;white-space:nowrap;letter-spacing:0.4px;-webkit-text-stroke:0.2px currentColor;">Select All</div><div style="position:absolute;left:237px;top:504.2px;width:19px;height:19px;border-radius:4px;background:#dbe4fb;border:1px solid #8099d6;box-sizing:border-box"></div><svg style="position:absolute;left:237px;top:504.2px;" width="19" height="19" viewBox="0 0 19 19"><path d="M3.7 9.2 L6.6 12.6 L15.2 6.6" fill="none" stroke="#1e48b4" stroke-width="1.8" stroke-linecap="round" stroke-linejoin="round"/></svg><div style="position:absolute;left:265px;top:506.16px;font-size:16px;line-height:16px;color:#353a43;font-weight:400;white-space:nowrap;">SMS</div><div style="position:absolute;left:340px;top:504.2px;width:19px;height:19px;border-radius:4px;background:#dbe4fb;border:1px solid #8099d6;box-sizing:border-box"></div><svg style="position:absolute;left:340px;top:504.2px;" width="19" height="19" viewBox="0 0 19 19"><path d="M3.7 9.2 L6.6 12.6 L15.2 6.6" fill="none" stroke="#1e48b4" stroke-width="1.8" stroke-linecap="round" stroke-linejoin="round"/></svg><div style="position:absolute;left:368.5px;top:506.16px;font-size:16px;line-height:16px;color:#353a43;font-weight:400;white-space:nowrap;">MMS</div><div style="position:absolute;left:446.5px;top:504.2px;width:19px;height:19px;border-radius:4px;background:#dbe4fb;border:1px solid #8099d6;box-sizing:border-box"></div><svg style="position:absolute;left:446.5px;top:504.2px;" width="19" height="19" viewBox="0 0 19 19"><path d="M3.7 9.2 L6.6 12.6 L15.2 6.6" fill="none" stroke="#1e48b4" stroke-width="1.8" stroke-linecap="round" stroke-linejoin="round"/></svg><div style="position:absolute;left:475px;top:506.16px;font-size:16px;line-height:16px;color:#353a43;font-weight:400;white-space:nowrap;">Voice</div><div style="position:absolute;left:237px;top:549px;width:830px;height:1px;background:#eceef1"></div><div style="position:absolute;left:237.5px;top:574.30px;font-size:15px;line-height:15px;color:#2c313b;font-weight:400;white-space:nowrap;letter-spacing:0.5px;-webkit-text-stroke:0.15px currentColor;">Number Type</div><div style="position:absolute;left:340px;top:575.15px;font-size:14px;line-height:14px;color:#71757d;font-weight:400;white-space:nowrap;">(OR)</div><div style="position:absolute;left:376.5px;top:574.30px;font-size:15px;line-height:15px;color:#1c48a6;font-weight:400;white-space:nowrap;letter-spacing:0.4px;-webkit-text-stroke:0.2px currentColor;">Select All</div><div style="position:absolute;left:237px;top:605.7px;width:19px;height:19px;border-radius:4px;background:#dbe4fb;border:1px solid #8099d6;box-sizing:border-box"></div><svg style="position:absolute;left:237px;top:605.7px;" width="19" height="19" viewBox="0 0 19 19"><path d="M3.7 9.2 L6.6 12.6 L15.2 6.6" fill="none" stroke="#1e48b4" stroke-width="1.8" stroke-linecap="round" stroke-linejoin="round"/></svg><div style="position:absolute;left:265px;top:607.46px;font-size:16px;line-height:16px;color:#353a43;font-weight:400;white-space:nowrap;">Local</div><div style="position:absolute;left:345px;top:605.7px;width:19px;height:19px;border-radius:4px;background:#dbe4fb;border:1px solid #8099d6;box-sizing:border-box"></div><svg style="position:absolute;left:345px;top:605.7px;" width="19" height="19" viewBox="0 0 19 19"><path d="M3.7 9.2 L6.6 12.6 L15.2 6.6" fill="none" stroke="#1e48b4" stroke-width="1.8" stroke-linecap="round" stroke-linejoin="round"/></svg><div style="position:absolute;left:374px;top:607.46px;font-size:16px;line-height:16px;color:#353a43;font-weight:400;white-space:nowrap;">Toll Free</div>
</body></html>
